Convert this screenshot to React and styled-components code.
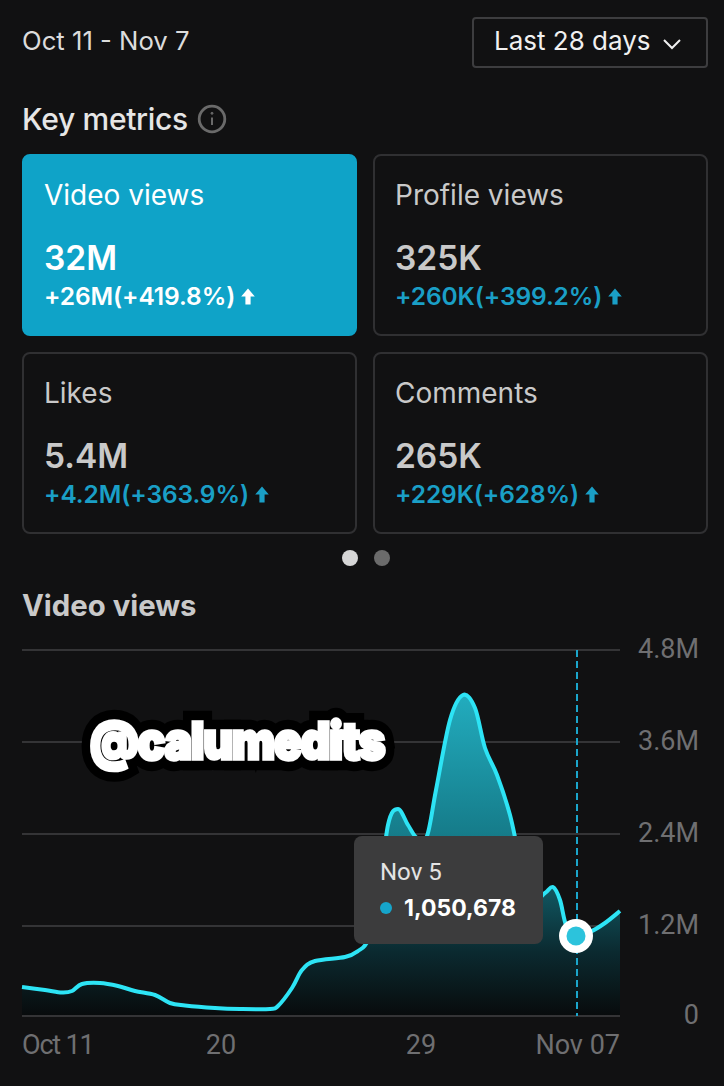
import React from "react";
import styled, { createGlobalStyle } from "styled-components";

const GlobalStyle = createGlobalStyle`
  html, body {
    margin: 0;
    background: #111112;
  }
  body {
    font-family: Inter, "Liberation Sans", sans-serif;
  }
`;

const Page = styled.div`
  width: 724px;
  height: 1086px;
  overflow: hidden;
  background: #111112;
`;

const TopBar = styled.div`
  display: flex;
  align-items: center;
  justify-content: space-between;
  padding: 17px 16px 0 22px;
`;

const DateRange = styled.div`
  margin-top: -3px;
  color: #dcdcdc;
  font-size: 25.7px;
  line-height: 48px;
`;

const RangeButton = styled.div`
  box-sizing: border-box;
  display: flex;
  align-items: center;
  justify-content: space-between;
  width: 236px;
  height: 51px;
  padding: 0 24px 4px 20px;
  border: 2px solid #3d3d3f;
  border-radius: 4px;
  color: #f0f0f0;
  font-size: 26px;

  svg {
    margin-top: 6px;
  }
`;

const SectionTitle = styled.div`
  display: flex;
  align-items: center;
  gap: 9px;
  margin: 32px 22px 0;
  height: 38px;
  color: #e6e6e6;
  font-size: 30px;
  font-weight: 500;
  letter-spacing: -0.3px;
`;

const CardGrid = styled.div`
  display: grid;
  grid-template-columns: 335px 335px;
  grid-auto-rows: 182px;
  gap: 16px;
  margin: 16px 16px 0 22px;
`;

const Card = styled.div`
  box-sizing: border-box;
  padding: 22px 20px 0;
  border: 2px solid ${(p) => (p.$active ? "#0fa3c8" : "#303032")};
  border-radius: 8px;
  background: ${(p) => (p.$active ? "#0fa3c8" : "transparent")};
  color: ${(p) => (p.$active ? "#ffffff" : "#c9c9c9")};
`;

const CardLabel = styled.div`
  font-size: 28px;
  line-height: 34px;
`;

const CardValue = styled.div`
  margin-top: 26px;
  font-size: 33.5px;
  line-height: 40px;
  font-weight: 600;
`;

const CardDelta = styled.div`
  display: flex;
  align-items: center;
  gap: 6px;
  margin-top: 3px;
  color: ${(p) => (p.$active ? "#ffffff" : "#1a9fc6")};
  font-size: 24.5px;
  line-height: 30px;
  font-weight: 600;
  letter-spacing: -0.1px;
`;

const Dots = styled.div`
  display: flex;
  justify-content: center;
  gap: 16px;
  margin-top: 16px;
  padding-left: 8px;
`;

const Dot = styled.div`
  width: 16px;
  height: 16px;
  border-radius: 50%;
  background: ${(p) => (p.$on ? "#d6d6d6" : "#6b6b6b")};
`;

const ChartTitle = styled.div`
  margin: 22px 22px 0;
  height: 36px;
  color: #c9c9c9;
  font-size: 29.3px;
  line-height: 36px;
  font-weight: 700;
`;

const ChartArea = styled.div`
  position: relative;
  width: 724px;
  height: 446px;
  margin-top: 6px;
`;

const ChartSvg = styled.svg`
  display: block;
`;

const AxisText = styled.text`
  fill: #6f6f71;
  font-family: Roboto, "Liberation Sans", sans-serif;
  font-size: 27px;
  letter-spacing: ${(p) => (p.$tight ? "-1.2px" : "0")};
`;

const Tooltip = styled.div`
  position: absolute;
  left: 354px;
  top: 206px;
  box-sizing: border-box;
  width: 189px;
  height: 108px;
  padding: 21px 0 0 26px;
  border-radius: 8px;
  background: #3c3c3d;
`;

const TooltipDate = styled.div`
  color: #e4e4e4;
  font-family: Roboto, "Liberation Sans", sans-serif;
  font-size: 24px;
  line-height: 30px;
`;

const TooltipRow = styled.div`
  display: flex;
  align-items: center;
  gap: 12px;
  margin-top: 6px;
  color: #ffffff;
  font-size: 23px;
  line-height: 30px;
  font-weight: 700;
`;

const TooltipDot = styled.span`
  width: 12px;
  height: 12px;
  border-radius: 50%;
  background: #16a5cb;
`;

const Watermark = styled.div`
  position: absolute;
  left: 90px;
  top: 76px;
  color: #ffffff;
  font-size: 46px;
  line-height: 68px;
  font-weight: 900;
  letter-spacing: -1.2px;
  white-space: nowrap;
  transform: scaleY(1.12);
  -webkit-text-stroke: 20px #000000;
  paint-order: stroke fill;

  &::after {
    content: attr(data-text);
    position: absolute;
    left: 0;
    top: 0;
    -webkit-text-stroke: 3px #ffffff;
  }
`;

const metrics = [
  { label: "Video views", value: "32M", delta: "+26M(+419.8%)", active: true },
  { label: "Profile views", value: "325K", delta: "+260K(+399.2%)" },
  { label: "Likes", value: "5.4M", delta: "+4.2M(+363.9%)" },
  { label: "Comments", value: "265K", delta: "+229K(+628%)" },
];

const gridLines = [
  { y: 650, label: "4.8M" },
  { y: 742, label: "3.6M" },
  { y: 834, label: "2.4M" },
  { y: 926, label: "1.2M" },
  { y: 1016, label: "0" },
];

const curve = [
  [22, 987], [45, 990], [62, 992.5], [72, 991], [82, 984], [100, 983], [118, 986],
  [135, 991], [155, 995], [170, 1003], [185, 1005.5], [215, 1008], [240, 1009],
  [270, 1009], [278, 1006], [292, 988], [302, 970], [315, 961], [345, 957],
  [358, 951], [368, 940], [378, 900], [388, 825], [398, 809], [408, 825], [417, 838],
  [427, 836], [436, 790], [450, 720], [463, 695], [475, 708], [485, 748], [497, 775],
  [510, 815], [520, 860], [532, 900], [545, 893], [553, 887], [560, 900], [566, 925],
  [575, 936], [590, 932], [605, 923], [620, 911],
];

// catmull-rom through the points
const smooth = (pts) => {
  let d = `M${pts[0][0]} ${pts[0][1]}`;
  for (let i = 0; i < pts.length - 1; i++) {
    const p0 = pts[i - 1] || pts[i];
    const p1 = pts[i];
    const p2 = pts[i + 1];
    const p3 = pts[i + 2] || p2;
    const c1x = p1[0] + (p2[0] - p0[0]) / 6;
    const c1y = p1[1] + (p2[1] - p0[1]) / 6;
    const c2x = p2[0] - (p3[0] - p1[0]) / 6;
    const c2y = p2[1] - (p3[1] - p1[1]) / 6;
    d += ` C${c1x} ${c1y} ${c2x} ${c2y} ${p2[0]} ${p2[1]}`;
  }
  return d;
};

const linePath = smooth(curve);

const UpArrow = () => (
  <svg width="14" height="17" viewBox="0 0 14 17" fill="currentColor">
    <path d="M7 0.5 L13.8 8.5 H9.6 V16.5 H4.4 V8.5 H0.2 Z" />
  </svg>
);

const Chevron = () => (
  <svg width="20" height="12" viewBox="0 0 20 12" fill="none" stroke="#f0f0f0" strokeWidth="2">
    <path d="M2 2 L10 10 L18 2" />
  </svg>
);

const InfoIcon = () => (
  <svg width="30" height="30" viewBox="0 0 30 30" fill="none" stroke="#6a6a6a" strokeWidth="2.8">
    <circle cx="15" cy="15" r="12.8" />
    <path d="M15 13.5 V21" strokeWidth="2" />
    <circle cx="15" cy="9.3" r="1" fill="#6a6a6a" strokeWidth="1" />
  </svg>
);

const Chart = () => (
  <ChartSvg width="724" height="446" viewBox="0 630 724 446">
    <defs>
      <linearGradient id="area" gradientUnits="userSpaceOnUse" x1="0" y1="695" x2="0" y2="1016">
        <stop offset="0" stopColor="#22acbe" />
        <stop offset="0.45" stopColor="#157a88" />
        <stop offset="0.8" stopColor="#0b2a30" />
        <stop offset="1" stopColor="#080b0c" />
      </linearGradient>
    </defs>
    {gridLines.map(({ y, label }) => (
      <g key={label}>
        <line x1="22" x2="620" y1={y} y2={y} stroke="#343436" strokeWidth="2" />
        <AxisText x="699" y={y + 8} textAnchor="end">{label}</AxisText>
      </g>
    ))}
    <path d={`${linePath} L620 1015 L22 1015 Z`} fill="url(#area)" />
    <path d={linePath} fill="none" stroke="#2de4f5" strokeWidth="4" />
    <line x1="577" x2="577" y1="650" y2="1016" stroke="#1ba6cb" strokeWidth="2" strokeDasharray="7 4" />
    <circle cx="576" cy="936" r="17" fill="#ffffff" />
    <circle cx="576" cy="936" r="9.5" fill="#2cc3dc" />
    <AxisText x="22" y="1054" $tight>Oct 11</AxisText>
    <AxisText x="221" y="1054" textAnchor="middle">20</AxisText>
    <AxisText x="421" y="1054" textAnchor="middle">29</AxisText>
    <AxisText x="620" y="1054" textAnchor="end">Nov 07</AxisText>
  </ChartSvg>
);

export default function App() {
  return (
    <Page>
      <GlobalStyle />
      <TopBar>
        <DateRange>Oct 11 - Nov 7</DateRange>
        <RangeButton>
          Last 28 days
          <Chevron />
        </RangeButton>
      </TopBar>
      <SectionTitle>
        Key metrics
        <InfoIcon />
      </SectionTitle>
      <CardGrid>
        {metrics.map((m) => (
          <Card key={m.label} $active={m.active}>
            <CardLabel>{m.label}</CardLabel>
            <CardValue>{m.value}</CardValue>
            <CardDelta $active={m.active}>
              {m.delta}
              <UpArrow />
            </CardDelta>
          </Card>
        ))}
      </CardGrid>
      <Dots>
        <Dot $on />
        <Dot />
      </Dots>
      <ChartTitle>Video views</ChartTitle>
      <ChartArea>
        <Chart />
        <Watermark data-text="@calumedits">@calumedits</Watermark>
        <Tooltip>
          <TooltipDate>Nov 5</TooltipDate>
          <TooltipRow>
            <TooltipDot />
            1,050,678
          </TooltipRow>
        </Tooltip>
      </ChartArea>
    </Page>
  );
}
